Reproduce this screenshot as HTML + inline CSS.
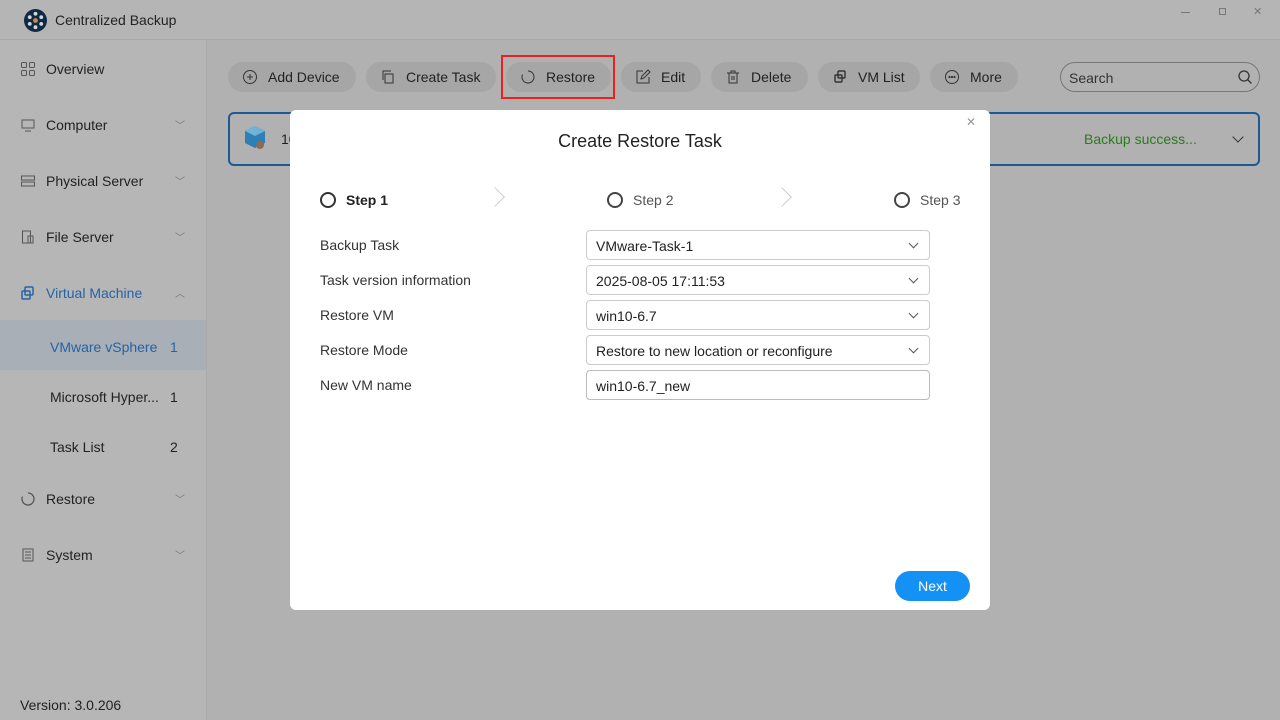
<!DOCTYPE html>
<html><head><meta charset="utf-8"><style>
*{box-sizing:border-box;margin:0;padding:0}
body{width:1280px;height:720px;overflow:hidden;font-family:"Liberation Sans",sans-serif;background:#b1b1b1;position:relative;color:#1f1f1f}
.top{position:absolute;left:0;top:0;width:1280px;height:40px;background:#b5b5b5;border-bottom:1px solid #aaa}
.side{position:absolute;left:0;top:40px;width:207px;height:680px;background:#b6b6b6;border-right:1px solid #aaa}
.nav{position:absolute;left:20px;font-size:14px;color:#222;display:flex;align-items:center}
.nav svg{margin-right:10px}
.chev{position:absolute;left:175px;font-size:10px;color:#777}
.sub{position:absolute;left:50px;font-size:14px;color:#222}
.cnt{position:absolute;left:170px;font-size:14px;color:#222}
.btn{position:absolute;top:62px;height:30px;border-radius:15px;background:#a6a6a6;font-size:14px;color:#222;display:flex;align-items:center;padding-left:14px}
.btn svg{margin-right:10px}
.modal{position:absolute;left:290px;top:110px;width:700px;height:500px;background:#fff;border-radius:6px}
.lbl{position:absolute;left:30px;font-size:14px;color:#333}
.sel{position:absolute;left:296px;width:344px;height:30px;border:1px solid #ccc;border-radius:4px;font-size:14px;color:#222;padding:7px 9px}
.sel.dd:after{content:"";position:absolute;right:12px;top:9px;width:6px;height:6px;border-right:1px solid #555;border-bottom:1px solid #555;transform:rotate(45deg)}
.step{position:absolute;top:82px;font-size:14px;display:flex;align-items:center}
.step i{display:inline-block;width:16px;height:16px;border:2px solid #333;border-radius:50%;margin-right:10px}
.arr{position:absolute;top:80px;width:14px;height:14px;border-right:1px solid #ccc;border-top:1px solid #ccc;transform:rotate(45deg)}
</style></head><body>
<div class="top">
<svg style="position:absolute;left:24px;top:9px" width="23" height="23" viewBox="0 0 24 24"><circle cx="12" cy="12" r="12" fill="#0f2a44"/><circle cx="12" cy="12" r="2.5" fill="#c9894d"/><g fill="#cfd8e0"><circle cx="12" cy="5" r="2"/><circle cx="12" cy="19" r="2"/><circle cx="6" cy="8.5" r="2"/><circle cx="18" cy="8.5" r="2"/><circle cx="6" cy="15.5" r="2"/><circle cx="18" cy="15.5" r="2"/></g></svg>
<div style="position:absolute;left:55px;top:12px;font-size:14px;color:#222">Centralized Backup</div>
<div style="position:absolute;left:1181px;top:12px;width:9px;height:1px;background:#777"></div>
<div style="position:absolute;left:1219px;top:8px;width:7px;height:7px;border:1px solid #777"></div>
<div style="position:absolute;left:1253px;top:5px;font-size:11px;color:#777">✕</div>
</div>
<div class="side">
<div class="nav" style="top:21px"><svg width="16" height="16" viewBox="0 0 16 16" fill="none" stroke="#555"><rect x="1.5" y="1.5" width="5" height="5" rx="1"/><rect x="9.5" y="1.5" width="5" height="5" rx="1"/><rect x="1.5" y="9.5" width="5" height="5" rx="1"/><rect x="9.5" y="9.5" width="5" height="5" rx="1"/></svg>Overview</div>
<div class="nav" style="top:77px"><svg width="16" height="16" viewBox="0 0 16 16" fill="none" stroke="#555"><rect x="2" y="3" width="12" height="8"/><path d="M5 14h6"/></svg>Computer</div><div class="chev" style="top:77px">﹀</div>
<div class="nav" style="top:133px"><svg width="16" height="16" viewBox="0 0 16 16" fill="none" stroke="#555"><rect x="1.5" y="3" width="13" height="4"/><rect x="1.5" y="9" width="13" height="4"/></svg>Physical Server</div><div class="chev" style="top:133px">﹀</div>
<div class="nav" style="top:189px"><svg width="16" height="16" viewBox="0 0 16 16" fill="none" stroke="#555"><rect x="2.5" y="2" width="8" height="12"/><rect x="8" y="7" width="5" height="7"/></svg>File Server</div><div class="chev" style="top:189px">﹀</div>
<div class="nav" style="top:245px;color:#2563a6"><svg width="16" height="16" viewBox="0 0 16 16" fill="none" stroke="#2563a6" stroke-width="1.5"><rect x="5" y="2" width="8" height="8" rx="1"/><rect x="2" y="6" width="8" height="8" rx="1"/></svg>Virtual Machine</div><div class="chev" style="top:245px">︿</div>
<div style="position:absolute;left:0;top:280px;width:206px;height:50px;background:#a8afb6"></div>
<div class="sub" style="top:299px;color:#2563a6">VMware vSphere</div><div class="cnt" style="top:299px;color:#2563a6">1</div>
<div class="sub" style="top:349px">Microsoft Hyper...</div><div class="cnt" style="top:349px">1</div>
<div class="sub" style="top:399px">Task List</div><div class="cnt" style="top:399px">2</div>
<div class="nav" style="top:451px"><svg width="16" height="16" viewBox="0 0 16 16" fill="none" stroke="#555" stroke-width="1.3"><path d="M8 2a6 6 0 1 1-5.5 3.6"/></svg>Restore</div><div class="chev" style="top:451px">﹀</div>
<div class="nav" style="top:507px"><svg width="16" height="16" viewBox="0 0 16 16" fill="none" stroke="#555"><rect x="3" y="2" width="10" height="12"/><path d="M5 5h6M5 8h6M5 11h6"/></svg>System</div><div class="chev" style="top:507px">﹀</div>
<div style="position:absolute;left:20px;top:657px;font-size:14px;color:#222">Version: 3.0.206</div>
</div>
<div class="btn" style="left:228px;width:128px"><svg width="16" height="16" viewBox="0 0 16 16" fill="none" stroke="#333"><circle cx="8" cy="8" r="6.5"/><path d="M8 5v6M5 8h6"/></svg>Add Device</div>
<div class="btn" style="left:366px;width:130px"><svg width="16" height="16" viewBox="0 0 16 16" fill="none" stroke="#333"><path d="M3 11V2h8"/><rect x="5" y="5" width="8" height="9"/></svg>Create Task</div>
<div class="btn" style="left:506px;width:105px"><svg width="16" height="16" viewBox="0 0 16 16" fill="none" stroke="#333"><path d="M8 2a6 6 0 1 1-5.5 3.6"/></svg>Restore</div>
<div style="position:absolute;left:501px;top:55px;width:114px;height:44px;border:2px solid #e8231f"></div>
<div class="btn" style="left:621px;width:80px"><svg width="16" height="16" viewBox="0 0 16 16" fill="none" stroke="#333"><path d="M8 2H2v12h12V8"/><path d="M6 10l1-3 6-6 2 2-6 6z"/></svg>Edit</div>
<div class="btn" style="left:711px;width:97px"><svg width="16" height="16" viewBox="0 0 16 16" fill="none" stroke="#333"><path d="M2 4h12M6 4V2h4v2M4 4v10h8V4M7 7v4M9 7v4"/></svg>Delete</div>
<div class="btn" style="left:818px;width:102px"><svg width="16" height="16" viewBox="0 0 16 16" fill="none" stroke="#333" stroke-width="1.4"><rect x="6" y="2" width="7" height="7" rx="1"/><rect x="3" y="6" width="7" height="7" rx="1"/></svg>VM List</div>
<div class="btn" style="left:930px;width:88px"><svg width="16" height="16" viewBox="0 0 16 16" fill="none" stroke="#333"><circle cx="8" cy="8" r="6.5"/><circle cx="5.5" cy="8" r=".6" fill="#333"/><circle cx="8" cy="8" r=".6" fill="#333"/><circle cx="10.5" cy="8" r=".6" fill="#333"/></svg>More</div>
<div style="position:absolute;left:1060px;top:62px;width:200px;height:30px;border:1px solid #777;border-radius:15px;font-size:14px;color:#333;padding:7px 8px">Search<svg style="position:absolute;right:6px;top:6px" width="16" height="16" viewBox="0 0 16 16" fill="none" stroke="#333" stroke-width="1.3"><circle cx="7" cy="7" r="5"/><path d="M10.5 10.5l4 4"/></svg></div>
<div style="position:absolute;left:228px;top:112px;width:1032px;height:54px;border:2px solid #1b5a95;border-radius:6px;background:#b1b1b1"></div>
<svg style="position:absolute;left:243px;top:125px" width="24" height="26" viewBox="0 0 24 26"><path d="M12 1l10 5v12l-10 5-10-5V6z" fill="#2f7fb3"/><path d="M12 1l10 5-10 5-10-5z" fill="#6fb3db"/><circle cx="17" cy="20" r="4" fill="#8a6a5a"/></svg>
<div style="position:absolute;left:281px;top:131px;font-size:14px">10</div>
<div style="position:absolute;left:1084px;top:131px;font-size:14px;color:#2b7a1e">Backup success...</div>
<div style="position:absolute;left:1234px;top:133px;width:8px;height:8px;border-right:1px solid #333;border-bottom:1px solid #333;transform:rotate(45deg)"></div>
<div class="modal">
<div style="position:absolute;left:0;width:700px;top:21px;text-align:center;font-size:18px;color:#222">Create Restore Task</div>
<div style="position:absolute;right:14px;top:5px;font-size:12px;color:#999">✕</div>
<div class="step" style="left:30px;font-weight:bold;color:#222"><i></i>Step 1</div>
<div class="arr" style="left:198px"></div>
<div class="step" style="left:317px;color:#555"><i style="border-color:#444"></i>Step 2</div>
<div class="arr" style="left:485px"></div>
<div class="step" style="left:604px;color:#555"><i style="border-color:#444"></i>Step 3</div>
<div class="lbl" style="top:127px">Backup Task</div><div class="sel dd" style="top:120px">VMware-Task-1</div>
<div class="lbl" style="top:162px">Task version information</div><div class="sel dd" style="top:155px">2025-08-05 17:11:53</div>
<div class="lbl" style="top:197px">Restore VM</div><div class="sel dd" style="top:190px">win10-6.7</div>
<div class="lbl" style="top:232px">Restore Mode</div><div class="sel dd" style="top:225px">Restore to new location or reconfigure</div>
<div class="lbl" style="top:267px">New VM name</div><div class="sel" style="top:260px;border-color:#bbb">win10-6.7_new</div>
<div style="position:absolute;left:605px;top:461px;width:75px;height:30px;border-radius:15px;background:#1391f5;color:#fff;font-size:14px;text-align:center;line-height:30px">Next</div>
</div>
</body></html>
